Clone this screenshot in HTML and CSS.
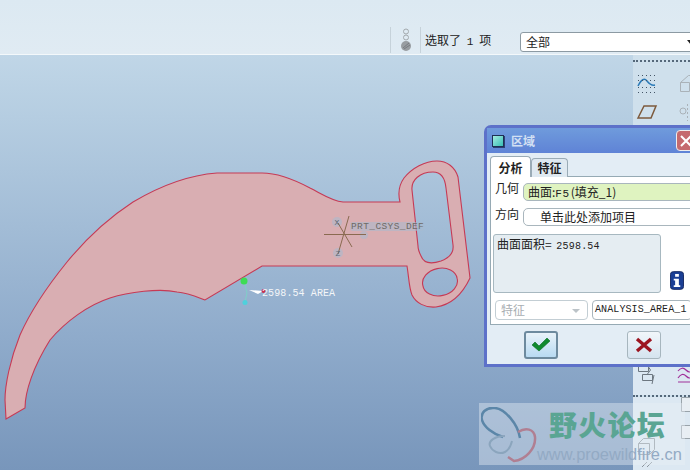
FILE: index.html
```html
<!DOCTYPE html>
<html lang="zh">
<head>
<meta charset="utf-8">
<title>区域</title>
<link rel="stylesheet" href="styles.css">
</head>
<body>
<div class="app">
  <header class="topbar">
    <div class="status-light">
      <svg width="14" height="24" viewBox="0 0 14 24">
        <circle cx="7" cy="3.500" r="2.500" fill="none" stroke="#a3a9ad"/>
        <circle cx="7" cy="9.500" r="2.500" fill="none" stroke="#a3a9ad"/>
        <circle cx="7" cy="18" r="5" fill="#989da1"/>
        <path d="M4 20l6-5M5 21l6-4" stroke="#777b80"/>
      </svg>
    </div>
    <span class="status-text">选取了 <span class="mono">1</span> 项</span>
    <div class="filter"><span>全部</span><i class="filter-arrow"></i></div>
  </header>
  <main class="viewport">
    <svg class="canvas" width="633" height="415" viewBox="0 55 633 415">
      <path class="part" fill-rule="evenodd" d="M6 419 L25 408 C25 392 33 367 50 340 C65 322 88 305 110 298 C128 292 160 288 177 292 C188 293 197 297 205 300 L262 266 L407 266 C409 278 409 288 412 295 C416 303 425 308 436 307 C450 305 462 295 470 278 L458 177 C455 167 447 161 437 161 C425 161 412 168 404 178 C399 185 398 194 400 202 L343 202 C332 201 322 194 310 188 C295 180 278 173 262 173 L217 173 C190 175 160 186 133 202 C110 217 85 240 67 262 C50 283 32 308 20 335 C10 360 5 385 5 400 Z M412 190 C411 180 420 172 433 172 C441 172 445 178 446 188 L453 245 C454 253 449 258 441 261 C432 264 424 264 421 256 C419 252 418 248 418 246 Z M422.900 285.600 A17.500 13 -12 1 1 457.100 278.400 A17.500 13 -12 1 1 422.900 285.600 Z"/>
      <g class="halo">
        <circle cx="337" cy="222" r="5"/>
        <circle cx="338" cy="253" r="5"/>
        <circle cx="364" cy="235" r="4"/>
        <rect x="350" y="222" width="74" height="9" rx="3"/>
      </g>
      <path class="csys" d="M324 234.500H366M338 223l14 24M349 216l-11 38"/>
      <text class="csys-axis" x="334.500" y="225">X</text>
      <text class="csys-axis" x="335.500" y="256">Z</text>
      <text class="csys-label" x="351" y="229">PRT_CSYS_DEF</text>
      <path class="tag-line" d="M244 281l3 12M247 293l-2 9"/>
      <path class="tag-arrow" d="M249 290l14 1-5 3z"/>
      <circle cx="244" cy="281" r="3.500" fill="#3ddc54"/>
      <circle cx="245" cy="302.500" r="2.500" fill="#4fd0dc"/>
      <circle cx="263.500" cy="291" r="2" fill="#c8304c"/>
      <text class="area-label" x="262" y="296">2598.54 AREA</text>
    </svg>
    <aside class="sidebar">
      <div class="dots"></div>
      <div class="tool-grid">
        <svg width="57" height="54" viewBox="0 0 57 54">
          <path d="M5 14Q10 4 14 9T22 13" fill="none" stroke="#2a7ab8" stroke-width="1.500"/>
          <path d="M5 3.500h18M5 8.500h18M5 15.500h18M5 20.500h18" stroke="#456" stroke-dasharray="1 3"/>
          <path d="M5 46L11 34H23L18 46Z" fill="none" stroke="#7d5a3c" stroke-width="1.500"/>
          <path d="M47.500 10.500h9v9h-9zM47.500 10.500l8-7h2" fill="none" stroke="#aab2b8"/>
          <circle cx="50" cy="39" r="3" fill="none" stroke="#aab2b8"/>
          <path d="M54.500 32v17" stroke="#aab2b8" stroke-dasharray="2 2"/>
        </svg>
      </div>
      <div class="tool-gap"></div>
      <div class="tool-grid lower">
        <svg width="57" height="30" viewBox="0 0 57 30">
          <path d="M5.500 3.500h10v5h-10zM9.500 11.500h10v6h-10zM15.500 4l2 3-3 4M21 12l-2 9" fill="none" stroke="#6d7780"/>
          <path d="M45 8q4-5 8-1t6 0M45 15q4-6 8-2t6 0M45 19h14" fill="none" stroke="#a0309a" stroke-width="1.200"/>
        </svg>
      </div>
      <div class="dots"></div>
      <div class="tool-grid bottom">
        <svg width="57" height="71" viewBox="0 0 57 71">
          <path d="M48.500 .5h12v14h-12zM48.500 28.500h12v13h-12z" fill="#e8eef3" stroke="#99a3aa"/>
          <path d="M5.500 46.500h11v11h-11zM5.500 46.500l5-5h11v11l-5 5" fill="none" stroke="#8b949c"/>
          <path d="M9 70l5-5M14 70l5-5" stroke="#8b949c"/>
        </svg>
      </div>
    </aside>
    <section class="dialog">
      <div class="dialog-title">
        <i class="dialog-icon"></i>
        <span class="dialog-name">区域</span>
        <button class="close-btn" type="button">
          <svg width="12" height="12" viewBox="0 0 12 12"><path d="M1 1l10 10M11 1L1 11" stroke="#fff" stroke-width="2"/></svg>
        </button>
      </div>
      <div class="dialog-body">
        <div class="tabs">
          <span class="tab active">分析</span>
          <span class="tab">特征</span>
        </div>
        <div class="panel">
          <div class="row first">
            <span class="row-label">几何</span>
            <span class="field selected">曲面:<b class="mono wide">F5</b>(填充_1)</span>
          </div>
          <div class="row">
            <span class="row-label">方向</span>
            <span class="field prompt">单击此处添加项目</span>
          </div>
          <div class="result-row">
            <div class="result">曲面面积= <span class="mono">2598.54</span></div>
            <svg class="info" width="14" height="19" viewBox="0 0 15 20">
              <rect x=".5" y=".5" width="14" height="19" rx="3" fill="#1b3f94" stroke="#12265e"/>
              <rect x="5.500" y="3" width="4" height="3" fill="#fff"/>
              <path d="M4 8h5.500v7H11v2H4v-2h1.500v-5H4z" fill="#fff"/>
            </svg>
          </div>
          <div class="name-row">
            <div class="combo">特征<i class="combo-arrow"></i></div>
            <div class="name-field">ANALYSIS_AREA_1</div>
          </div>
        </div>
        <div class="actions">
          <button class="action ok" type="button">
            <svg width="20" height="15" viewBox="0 0 20 15"><path d="M1 8l3-3 4 4 8-8 3 3-11 10z" fill="#0f8a2e" stroke="#0a6a22" stroke-width=".6"/></svg>
          </button>
          <button class="action cancel" type="button">
            <svg width="18" height="16" viewBox="0 0 18 16"><path d="M2 2l14 12M16 2L2 14" stroke="#9c1520" stroke-width="3.400"/></svg>
          </button>
        </div>
      </div>
    </section>
    <div class="watermark">
      <svg class="wm-logo" width="60" height="56" viewBox="0 0 60 56">
        <path d="M39 31C37 17 24 2 14 1 5 0-1 6 1 13 3 20 12 27 22 30" fill="none" stroke="#5b86a8" stroke-width="2.500"/>
        <path d="M37 25C45 20 53 22 54 30 55 42 44 53 33 54L27 50" fill="none" stroke="#b07f92" stroke-width="2.500"/>
        <path d="M24 29C14 29 7 34 9 39 11 44 18 48 24 45 28 43 30 38 31 34" fill="none" stroke="#8ba5bd" stroke-width="2"/>
      </svg>
      <div class="wm-text">
        <span class="wm-cn">野火论坛</span>
        <span class="wm-url">www.proewildfire.cn</span>
      </div>
    </div>
  </main>
</div>
</body>
</html>
```
FILE: styles.css
```css
* { box-sizing: border-box; }
html, body { margin: 0; padding: 0; }
body { font-family: "Noto Sans CJK SC", "Liberation Sans", sans-serif; color: #222; }
.app { width: 690px; height: 470px; overflow: hidden; display: flex; flex-direction: column; }
.mono { font-family: "Liberation Mono", monospace; font-weight: 400; font-size: 10px; letter-spacing: .2px; }
.mono.wide { font-size: 11px; letter-spacing: .6px; margin-right: 1px; }

.topbar { height: 55px; flex: none; display: flex; align-items: flex-end; padding-left: 390px; background: linear-gradient(#dce9f2, #e0ebf3); border-bottom: 1px solid #f3f8fb; }
.status-light { width: 31px; height: 26px; flex: none; margin-bottom: 1px; display: flex; align-items: center; justify-content: center; border-left: 1px solid #c6d2da; border-right: 1px solid #c6d2da; }
.status-text { width: 99px; height: 28px; flex: none; padding-left: 4px; font-size: 12px; line-height: 27px; white-space: pre; word-spacing: 3px; }
.status-text .mono { font-size: 11px; }
.filter { width: 180px; height: 20px; margin-bottom: 2px; padding-left: 5px; background: #fff; border: 1px solid #8c9aa3; border-radius: 3px; font-size: 12px; line-height: 18px; flex: none; position: relative; }
.filter-arrow { position: absolute; left: 166px; top: 7px; border: 4px solid transparent; border-top: 5px solid #222; border-bottom: 0; }

.viewport { flex: 1; min-height: 0; position: relative; display: flex; background: linear-gradient(#c0d6e7, #b5cde1 15%, #8fabcb 68%, #7896bb); }
.canvas { flex: none; display: block; }
.part { fill: #d9aeb2; stroke: #c63a55; stroke-width: 1.100; }
.halo { fill: #a9bbd0; opacity: .55; }
.csys { fill: none; stroke: #8a6a50; stroke-width: 1; }
.csys-axis { font: 8px "Liberation Mono", monospace; fill: #5e6a78; }
.csys-label { font: 9.500px "Liberation Mono", monospace; fill: #6e6a66; letter-spacing: .4px; }
.area-label { font: 10px "Liberation Mono", monospace; fill: #f4f6f8; letter-spacing: .1px; }
.tag-line { fill: none; stroke: #7ed0c8; }
.tag-arrow { fill: #fff; }

.sidebar { width: 57px; flex: none; background: #cfe0ec; display: flex; flex-direction: column; padding-top: 5px; }
.dots { height: 2px; flex: none; border-top: 2px dotted #55687a; }
.tool-grid { padding-top: 10px; flex: none; }
.tool-grid svg { display: block; }
.tool-gap { height: 237px; flex: none; }
.tool-grid.lower { padding-top: 0; height: 32px; background: #dce8f2; }
.tool-grid.bottom { padding-top: 0; background: #dce8f2; flex: 1; }

.dialog { position: absolute; left: 484px; top: 70px; width: 226px; height: 242px; display: flex; flex-direction: column; background: #5f74cb; border: 3px solid #5d71c9; border-radius: 7px 7px 0 0; }
.dialog-title { height: 25px; flex: none; display: flex; align-items: center; padding-left: 5px; background: linear-gradient(#6f9bdc, #5f83d6); }
.dialog-icon { width: 12px; height: 12px; flex: none; background: linear-gradient(135deg, #a5ece0, #38bdb5); border: 1px solid #1f2f55; box-shadow: 1px 1px 0 #2c3f73; }
.dialog-name { margin-left: 7px; flex: none; font-size: 12px; font-weight: 700; color: #d3e0f3; white-space: nowrap; }
.close-btn { margin-left: 141px; flex: none; width: 30px; height: 21px; padding: 0 0 0 3px; border: 1px solid #eee; border-radius: 4px; background: #c56a6e; display: flex; align-items: center; }
.dialog-body { flex: 1; min-height: 0; background: #e3edf5; padding: 3px 0 0 3px; display: flex; flex-direction: column; }
.tabs { display: flex; height: 21px; flex: none; margin-bottom: -1px; position: relative; }
.tab { width: 37px; height: 19px; margin-top: 2px; text-align: center; font-size: 12px; line-height: 18px; font-weight: 700; background: #dfe9f1; border: 1px solid #9aabb6; border-bottom: 0; border-radius: 4px 4px 0 0; }
.tab.active { width: 41px; height: 21px; margin-top: 0; background: #fff; line-height: 21px; }
.panel { height: 149px; flex: none; background: #fff; border: 1px solid #96aab4; padding: 4px 0 0 4px; display: flex; flex-direction: column; }
.row { display: flex; height: 25px; flex: none; font-size: 12px; }
.row.first { height: 26px; }
.row-label { width: 28px; flex: none; line-height: 14px; color: #222; }
.field { display: block; height: 18px; width: 180px; flex: none; border: 1px solid #a9b6bd; border-radius: 5px; line-height: 16px; margin-top: 2px; }
.field.selected { background: #dff3c0; padding-left: 4px; }
.field.prompt { padding-left: 16px; margin-top: 1px; background: #fff; }
.result-row { display: flex; align-items: flex-end; height: 59px; flex: none; margin: 2px 0 0 -2px; }
.result { width: 168px; height: 59px; flex: none; background: #e5edf2; border: 1px solid #a7b8c0; border-radius: 3px; padding: 1px 3px; font-size: 12px; line-height: 16px; word-spacing: 2px; }
.info { margin-left: 9px; margin-bottom: 3px; flex: none; }
.name-row { display: flex; gap: 4px; margin-top: 7px; height: 20px; flex: none; }
.combo { width: 93px; flex: none; border: 1px solid #c3ced4; border-radius: 4px; font-size: 12px; line-height: 18px; padding-left: 5px; color: #a8aeb2; background: #fff; position: relative; }
.combo-arrow { position: absolute; right: 7px; top: 8px; border: 4px solid transparent; border-top: 4px solid #bcc3c8; border-bottom: 0; }
.name-field { width: 100px; flex: none; border: 1px solid #a9b6bd; border-radius: 4px; font: 10px/18px "Liberation Mono", monospace; padding-left: 2px; white-space: nowrap; color: #222; letter-spacing: .1px; }
.actions { flex: 1; display: flex; align-items: center; padding: 0 0 0 34px; gap: 69px; }
.action { width: 34px; height: 28px; padding: 0; display: flex; align-items: center; justify-content: center; border: 1px solid #a7b6be; border-radius: 3px; background: linear-gradient(#f1f6fa, #d5e4ef); }
.action.ok { border: 2px solid #6d8a9e; background: linear-gradient(#e8f2f9, #b8daf2); }

.watermark { position: absolute; left: 479px; top: 348px; width: 206px; height: 62px; display: flex; background: rgba(230, 238, 245, .42); padding: 4px 0 0 2px; }
.wm-logo { flex: none; }
.wm-text { display: flex; flex-direction: column; margin-left: 8px; }
.wm-cn { font-size: 28px; line-height: 30px; font-weight: 900; color: #5aa593; letter-spacing: 1.250px; margin-top: 2px; white-space: nowrap; }
.wm-url { font: 16.400px/18px "Liberation Sans", sans-serif; color: #93aac4; margin: 6px 0 0 -12px; white-space: nowrap; }
```
